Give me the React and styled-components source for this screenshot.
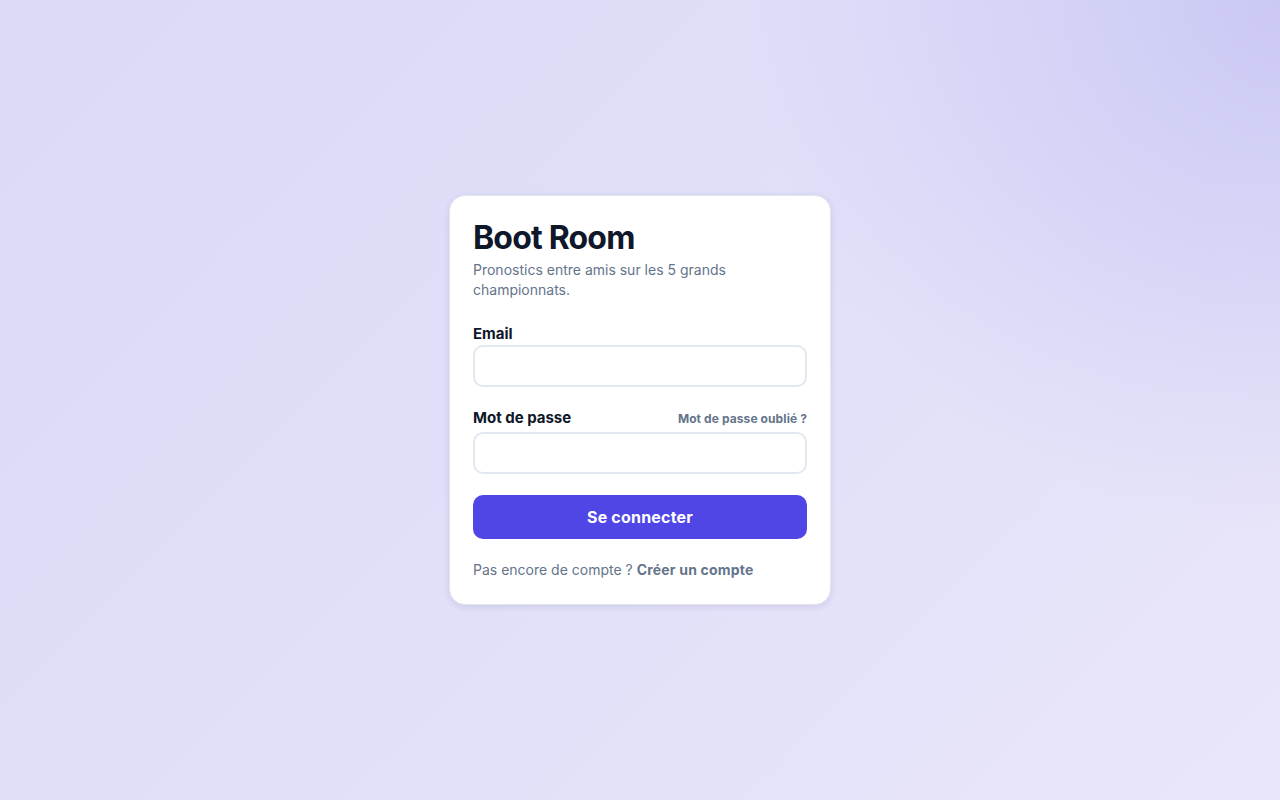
import React from "react";
import styled, { createGlobalStyle } from "styled-components";

const Global = createGlobalStyle`
  html, body { margin: 0; padding: 0; }
  body {
    font-family: Inter, "Noto Sans", sans-serif;
    -webkit-font-smoothing: antialiased;
  }
  * { box-sizing: border-box; }
`;

const Page = styled.div`
  width: 100%;
  min-height: 100vh;
  display: flex;
  align-items: center;
  justify-content: center;
  background:
    radial-gradient(circle at 100% 0%, rgba(200, 198, 243, 0.9) 0%, rgba(200, 198, 243, 0) 35%),
    linear-gradient(135deg, #dadaf7 0%, #e0dff9 45%, #e9e6f9 100%);
`;

const Card = styled.div`
  width: 382px;
  background: #ffffff;
  border-radius: 16px;
  border: 1px solid #e4e4f0;
  box-shadow: 0 2px 6px rgba(60, 60, 120, 0.12);
  padding: 23px 23px 24px;
  display: flex;
  flex-direction: column;
`;

const Title = styled.h1`
  margin: 0;
  font-size: 32px;
  line-height: 38px;
  font-weight: 700;
  letter-spacing: -0.8px;
  color: #0f172a;
`;

const Subtitle = styled.p`
  margin: 3px 0 0;
  max-width: 262px;
  font-size: 14px;
  line-height: 20px;
  color: #64748b;
`;

const Form = styled.form`
  margin-top: 24px;
  display: flex;
  flex-direction: column;
`;

const Field = styled.div`
  display: flex;
  flex-direction: column;
  margin-bottom: 21px;
`;

const LabelRow = styled.div`
  display: flex;
  justify-content: space-between;
  align-items: baseline;
  margin-bottom: ${(p) => p.$space || "1px"};
`;

const Label = styled.label`
  font-size: 15px;
  line-height: 20px;
  font-weight: 700;
  color: #0f172a;
`;

const SmallLink = styled.a`
  font-size: 12px;
  font-weight: 700;
  color: #64748b;
  text-decoration: none;
  letter-spacing: 0.1px;
`;

const Input = styled.input`
  height: 42px;
  width: 100%;
  border: 2px solid #e2e8f0;
  border-radius: 10px;
  padding: 0 12px;
  font-size: 15px;
  font-family: inherit;
  outline: none;
  background: #fff;
`;

const Button = styled.button`
  height: 44px;
  width: 100%;
  border: none;
  border-radius: 10px;
  background: #4f46e5;
  color: #ffffff;
  font-family: inherit;
  font-size: 16px;
  font-weight: 700;
  letter-spacing: 0.2px;
  cursor: pointer;
`;

const Footer = styled.p`
  margin: 21px 0 0;
  font-size: 14px;
  line-height: 20px;
  color: #64748b;
`;

const FooterLink = styled.a`
  font-weight: 700;
  color: #64748b;
  text-decoration: none;
  letter-spacing: 0.2px;
`;

export default function App() {
  return (
    <>
      <Global />
      <Page>
        <Card>
          <Title>Boot Room</Title>
          <Subtitle>Pronostics entre amis sur les 5 grands championnats.</Subtitle>
          <Form onSubmit={(e) => e.preventDefault()}>
            <Field>
              <LabelRow>
                <Label htmlFor="email">Email</Label>
              </LabelRow>
              <Input id="email" type="email" />
            </Field>
            <Field>
              <LabelRow $space="4px">
                <Label htmlFor="pw">Mot de passe</Label>
                <SmallLink href="#">Mot de passe oublié ?</SmallLink>
              </LabelRow>
              <Input id="pw" type="password" />
            </Field>
            <Button type="submit">Se connecter</Button>
          </Form>
          <Footer>
            Pas encore de compte ? <FooterLink href="#">Créer un compte</FooterLink>
          </Footer>
        </Card>
      </Page>
    </>
  );
}
